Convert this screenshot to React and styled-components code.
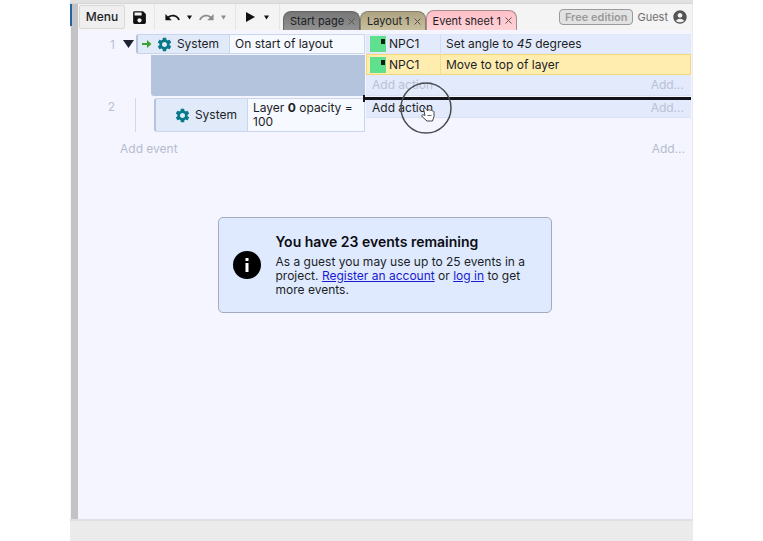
import React, { useState } from 'react'
import styled, { createGlobalStyle } from 'styled-components'
import { MdSave, MdUndo, MdRedo, MdSettings, MdAccountCircle } from 'react-icons/md'

const GlobalStyle = createGlobalStyle`
    * {
        box-sizing: border-box;
    }
    body {
        margin: 0;
        background: #fff;
        color: #1c1e26;
        font-family: Inter, "Liberation Sans", sans-serif;
        font-size: 12px;
        line-height: 14px;
    }
    button {
        margin: 0;
        padding: 0;
        border: 0;
        background: none;
        color: inherit;
        font: inherit;
        cursor: pointer;
    }
    svg {
        flex-shrink: 0;
    }
`
const Frame = styled.div`
    min-height: 100vh;
    margin: 0 70px;
    display: flex;
    flex-direction: column;
`
const TitleStrip = styled.div`
    height: 4px;
    background: #e1e1e1;
    border-bottom: 1px solid #d6d6d6;
`
const Body = styled.div`
    flex: 1;
    display: flex;
`
const Splitter = styled.div`
    width: 8px;
    background: linear-gradient(#1f66a5, #1f66a5) no-repeat 0 0 / 2px 22px, linear-gradient(90deg, #f4f4f4 1px, #c3c3c5 1px);
`
const Main = styled.main`
    flex: 1;
    min-width: 0;
    display: flex;
    flex-direction: column;
    background: #f4f5ff;
    border-right: 1px solid #e9e9f0;
`
const Toolbar = styled.header`
    height: 26px;
    display: flex;
    align-items: center;
    background: #f4f4f4;
`
const MenuButton = styled.button`
    width: 46px;
    height: 24px;
    margin-left: 1px;
    border: 1px solid #d8d8d8;
    border-radius: 2px;
    background: #efefef;
    font-weight: 500;
`
const ToolGroup = styled.div`
    height: 26px;
    display: flex;
    align-items: center;
    gap: ${props => props.gap || 0}px;
    padding: 0 ${props => props.pad}px;
    border-right: 1px solid #e6e6e6;
`
const ToolButton = styled.button`
    display: flex;
    align-items: center;
    color: ${props => props.muted ? "#8b8b8b" : "#111"};
`
const Tabs = styled.nav`
    align-self: flex-end;
    display: flex;
    align-items: flex-end;
    margin-left: 3px;
`
const Tab = styled.div`
    height: ${props => props.active ? 20 : 19}px;
    display: flex;
    align-items: center;
    gap: 4px;
    padding: 0 4px 0 6px;
    border: 1px solid ${props => props.edge};
    border-bottom: 0;
    border-radius: 8px 8px 0 0;
    background: ${props => props.fill};
    font-size: 11px;
    white-space: nowrap;
`
const CloseButton = styled.button`
    display: flex;
    color: #5c5350;
`
const Account = styled.div`
    margin-left: auto;
    padding-right: 4px;
    display: flex;
    align-items: center;
    gap: 4px;
    color: #6e6e6e;
    font-size: 11px;
`
const Edition = styled.button`
    height: 16px;
    padding: 0 5px;
    border: 1px solid #9a9a9a;
    border-radius: 4px;
    background: #e2e2e2;
    color: #9a9a9a;
    font-weight: 600;
    line-height: 14px;
`
const Sheet = styled.section`
    flex: 1;
    padding: 4px 1px 0 0;
`
const EventRow = styled.div`
    display: flex;
    margin-bottom: ${props => props.gap || 0}px;
`
const Gutter = styled.div`
    width: 58px;
    padding: 4px 2px 0 0;
    display: flex;
    justify-content: flex-end;
    gap: 8px;
    color: #b9bfd3;
`
const SubGutter = styled(Gutter)`
    width: 76px;
    padding: 2px 0 0;
    gap: 20px;

    &::after {
        content: "";
        width: 18px;
        margin-top: -2px;
        border-left: 1px solid #d3d8e8;
    }
`
const EventBlock = styled.div`
    width: ${props => props.nested ? 211 : 229}px;
    display: flex;
    flex-direction: column;
`
const Condition = styled.div`
    flex: ${props => props.fill ? 1 : "none"};
    min-height: 20px;
    display: flex;
    border: 1px solid #c9d6ec;
    border-left: 2px solid #b4c4de;
    border-radius: 3px 0 0 3px;
    background: #e0eaf9;
`
const ObjectCell = styled.div`
    width: 91px;
    display: flex;
    align-items: center;
    justify-content: flex-end;
    gap: 4px;
    padding-right: 10px;
`
const ConditionText = styled.div`
    flex: 1;
    padding: 2px 5px;
    border-left: 1px solid #c9d6ec;
    background: #f6f9ff;
`
const EventFiller = styled.div`
    flex: 1;
    margin: 1px 0 0 15px;
    border-radius: 0 0 0 3px;
    background: #b5c4dd;
`
const Actions = styled.div`
    flex: 1;
    min-width: 0;
    margin-left: 1px;
    background: #e3eafb;
    align-self: flex-start;
`
const Action = styled.div`
    height: ${props => props.selected ? 21 : 20}px;
    display: flex;
    align-items: center;
    border: 1px solid ${props => props.selected ? "#f5d873" : "#dfe6f5"};
    background: ${props => props.selected ? "#ffedb0" : "#e3eafb"};
`
const ActionObject = styled.div`
    width: 74px;
    align-self: stretch;
    display: flex;
    align-items: center;
    gap: 3px;
    padding-left: 3px;
    border-right: 1px solid ${props => props.selected ? "#f0dc9a" : "#d2dcf0"};
`
const ActionText = styled.div`
    padding-left: 5px;
    white-space: nowrap;
`
const AddRow = styled.div`
    position: relative;
    height: ${props => props.short ? 20 : 21}px;
    display: flex;
    align-items: center;
    justify-content: space-between;
    padding: 0 7px 0 6px;
    border-bottom: 1px solid #d9e1f2;
    color: #b9c1d7;
`
const AddAction = styled.button`
    color: ${props => props.hovered ? "#1c1e26" : "inherit"};
`
const DropLine = styled.div`
    position: absolute;
    left: -3px;
    right: 0;
    top: -1px;
    height: 3px;
    background: #14151b;

    &::before {
        content: "";
        position: absolute;
        left: 0;
        top: -2px;
        width: 2px;
        height: 7px;
        background: #14151b;
    }
`
const Pointer = styled.svg`
    position: absolute;
    left: 34px;
    top: -16px;
    pointer-events: none;
`
const AddEventRow = styled.div`
    display: flex;
    justify-content: space-between;
    padding: 0 6px 0 42px;
    color: #b4bccf;
`
const Notice = styled.aside`
    width: 334px;
    min-height: 96px;
    margin: 61px auto 0;
    display: flex;
    align-items: center;
    gap: 15px;
    padding: 0 14px;
    border: 1px solid #a3aabd;
    border-radius: 5px;
    background: #dfeaff;
`
const NoticeTitle = styled.h2`
    margin: 0 0 5px;
    color: #0c0d12;
    font-size: 14px;
    font-weight: 600;
    line-height: 16px;
`
const NoticeText = styled.p`
    margin: 0;
`
const Link = styled.a`
    color: #1a1ad2;
`
const StatusBar = styled.footer`
    height: 22px;
    border-top: 2px solid #dfdfe4;
    background: #ebebeb;
`

const Caret = ({ label, muted }) => (
    <ToolButton aria-label={label} muted={muted ? 1 : undefined}>
        <svg width="5" height="5" viewBox="0 0 5 5"><path d="M0 .5h5L2.500 4.500z" fill="currentColor"/></svg>
    </ToolButton>
)

const Sprite = () => (
    <svg width="16" height="16" viewBox="0 0 16 16">
        <rect width="16" height="16" fill="#5fe08f"/>
        <rect x="11" y="3" width="4" height="5" fill="#0d2013"/>
    </svg>
)

const tabItems = [
    { id: 1, title: "Start page", fill: "linear-gradient(#767676, #929292)", edge: "#666" },
    { id: 2, title: "Layout 1", fill: "linear-gradient(#ada381, #c9c09f)", edge: "#88806a" },
    { id: 3, title: "Event sheet 1", fill: "linear-gradient(#ffbfc7, #ffd3d8)", edge: "#a58a8e" },
]

const App = () => {
    const [activeTab, setActiveTab] = useState(3);
    const [selected, setSelected] = useState(2);

    const actionItems = [
        { id: 1, text: <>Set angle to <i>45</i> degrees</> },
        { id: 2, text: "Move to top of layer" },
    ]

    return (
        <>
            <GlobalStyle/>
            <Frame>
                <TitleStrip/>
                <Body>
                    <Splitter/>
                    <Main>
                        <Toolbar>
                            <MenuButton>Menu</MenuButton>
                            <ToolGroup pad={6}>
                                <ToolButton aria-label="Save"><MdSave size={17}/></ToolButton>
                            </ToolGroup>
                            <ToolGroup pad={9} gap={6}>
                                <ToolButton aria-label="Undo"><MdUndo size={17}/></ToolButton>
                                <Caret label="Undo history"/>
                                <ToolButton aria-label="Redo" muted={1}><MdRedo size={17}/></ToolButton>
                                <Caret label="Redo history" muted/>
                            </ToolGroup>
                            <ToolGroup pad={10} gap={9}>
                                <ToolButton aria-label="Preview">
                                    <svg width="9" height="10" viewBox="0 0 9 10"><path d="M0 0l9 5-9 5z" fill="currentColor"/></svg>
                                </ToolButton>
                                <Caret label="Preview options"/>
                            </ToolGroup>
                            <Tabs>
                                {tabItems.map((item)=>(
                                    <Tab key={item.id} fill={item.fill} edge={item.edge} active={activeTab === item.id ? 1 : undefined}>
                                        <button onClick={()=> setActiveTab(item.id)}>{item.title}</button>
                                        <CloseButton aria-label={"Close " + item.title}>
                                            <svg width="7" height="7" viewBox="0 0 7 7"><path d="M.5.5l6 6M6.500.5l-6 6" stroke="currentColor"/></svg>
                                        </CloseButton>
                                    </Tab>
                                ))}
                            </Tabs>
                            <Account>
                                <Edition>Free edition</Edition>
                                <span>Guest</span>
                                <MdAccountCircle size={16} color="#555"/>
                            </Account>
                        </Toolbar>
                        <Sheet>
                            <EventRow gap={2}>
                                <Gutter>
                                    <span>1</span>
                                    <svg width="11" height="12" viewBox="0 0 11 12"><path d="M0 2h11L5.500 10z" fill="#1f2230"/></svg>
                                </Gutter>
                                <EventBlock>
                                    <Condition>
                                        <ObjectCell>
                                            <svg width="10" height="8" viewBox="0 0 10 8"><path d="M0 3h5V0l4.500 4L5 8V5H0z" fill="#3da32c"/></svg>
                                            <MdSettings size={17} color="#08798a"/>
                                            System
                                        </ObjectCell>
                                        <ConditionText>On start of layout</ConditionText>
                                    </Condition>
                                    <EventFiller/>
                                </EventBlock>
                                <Actions>
                                    {actionItems.map((item)=>(
                                        <Action key={item.id} selected={selected === item.id ? 1 : undefined} onClick={()=> setSelected(item.id)}>
                                            <ActionObject selected={selected === item.id ? 1 : undefined}>
                                                <Sprite/>
                                                NPC1
                                            </ActionObject>
                                            <ActionText>{item.text}</ActionText>
                                        </Action>
                                    ))}
                                    <AddRow>
                                        <AddAction>Add action</AddAction>
                                        <button>Add...</button>
                                    </AddRow>
                                </Actions>
                            </EventRow>
                            <EventRow gap={10}>
                                <SubGutter>
                                    <span>2</span>
                                </SubGutter>
                                <EventBlock nested={1}>
                                    <Condition fill="true">
                                        <ObjectCell>
                                            <MdSettings size={17} color="#08798a"/>
                                            System
                                        </ObjectCell>
                                        <ConditionText>Layer <b>0</b> opacity = 100</ConditionText>
                                    </Condition>
                                </EventBlock>
                                <Actions>
                                    <AddRow short={1}>
                                        <AddAction hovered={1}>Add action</AddAction>
                                        <button>Add...</button>
                                        <DropLine/>
                                        <Pointer width="52" height="52" viewBox="0 0 52 52">
                                            <circle cx="26" cy="26" r="25" fill="none" stroke="#4a4c54" strokeWidth="1.500"/>
                                            <path d="M23.500 26.500c1-1 2-.5 3 1l1 1.500c0-1.500 2-1.500 2.500-.5.8-.8 2-.3 2.200.5 1-.4 1.800.2 1.800 1.200v4.300l-1.500 4.500h-5.500l-4.500-4c-1.500-1.200-.5-2.800 1-2.200l1.500.7z" fill="#fff" stroke="#444" strokeWidth="1" strokeLinejoin="round"/>
                                            <path d="M27.500 33.500h4" stroke="#666" fill="none"/>
                                        </Pointer>
                                    </AddRow>
                                </Actions>
                            </EventRow>
                            <AddEventRow>
                                <button>Add event</button>
                                <button>Add...</button>
                            </AddEventRow>
                            <Notice>
                                <svg width="28" height="28" viewBox="0 0 28 28">
                                    <circle cx="14" cy="14" r="14" fill="#000"/>
                                    <path d="M12.500 7h3v3h-3zM12.500 12h3v9h-3z" fill="#fff"/>
                                </svg>
                                <div>
                                    <NoticeTitle>You have 23 events remaining</NoticeTitle>
                                    <NoticeText>
                                        As a guest you may use up to 25 events in a project. <Link href="#register">Register an account</Link> or <Link href="#login">log in</Link> to get more events.
                                    </NoticeText>
                                </div>
                            </Notice>
                        </Sheet>
                    </Main>
                </Body>
                <StatusBar/>
            </Frame>
        </>
    )
}

export default App
